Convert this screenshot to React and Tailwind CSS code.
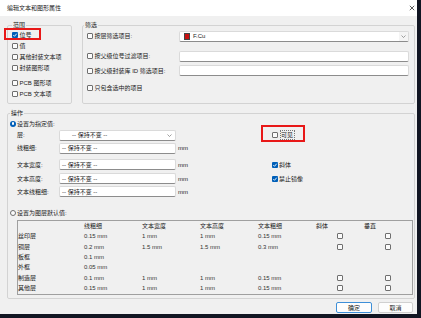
import React from "react";

const FONT = "font-['Liberation_Sans','Noto_Sans_CJK_SC',sans-serif]";

function Box({ checked }) {
  if (checked) {
    return (
      <span className="w-[6px] h-[6px] shrink-0 rounded-[1px] bg-[#005fb8] flex items-center justify-center">
        <svg width="6" height="6" viewBox="0 0 6 6">
          <path d="M1.3 3.1 L2.5 4.3 L4.7 1.7" fill="none" stroke="#fff" strokeWidth="0.9" />
        </svg>
      </span>
    );
  }
  return <span className="w-[6px] h-[6px] shrink-0 rounded-[1px] border border-[#6f6f6f] bg-[#fbfbfb]" />;
}

function Radio({ checked }) {
  if (checked) {
    return (
      <span className="w-[6px] h-[6px] shrink-0 rounded-full bg-[#005fb8] flex items-center justify-center">
        <span className="w-[2.5px] h-[2.5px] rounded-full bg-white" />
      </span>
    );
  }
  return <span className="w-[6px] h-[6px] shrink-0 rounded-full border border-[#6f6f6f] bg-[#fbfbfb]" />;
}

function Chevron() {
  return (
    <svg width="5" height="3" viewBox="0 0 5 3">
      <path d="M0.5 0.5 L2.5 2.5 L4.5 0.5" fill="none" stroke="#777" strokeWidth="0.7" />
    </svg>
  );
}

function Field({ children, className = "" }) {
  return (
    <div className={`h-full bg-white border border-[#dadada] border-b-[#8c8c8c] rounded-[2px] flex items-center ${className}`}>
      {children}
    </div>
  );
}

function Check({ label, checked }) {
  return (
    <div className="h-[11px] flex items-center gap-[1.5px] whitespace-nowrap">
      <Box checked={checked} />
      <span>{label}</span>
    </div>
  );
}

const rows = [
  ["丝印层", "0.15 mm", "1 mm", "1 mm", "0.15 mm", true],
  ["铜层", "0.2 mm", "1.5 mm", "1.5 mm", "0.3 mm", true],
  ["板框", "0.1 mm", "", "", "", false],
  ["外框", "0.05 mm", "", "", "", false],
  ["制造层", "0.1 mm", "1 mm", "1 mm", "0.15 mm", true],
  ["其他层", "0.15 mm", "1 mm", "1 mm", "0.15 mm", true],
];

const KEEP = "-- 保持不变 --";

function ValueRow({ label, dropdown, unit = true, extra, className = "" }) {
  return (
    <div className={`h-[11px] flex items-center pl-[9px] ${className}`}>
      <div className="w-[254px] h-full flex items-center">
        <span className="w-[42px] whitespace-nowrap">{label}</span>
        <div className="w-[117px] h-full">
          {dropdown ? (
            <Field className="pl-[12px] pr-[3px] h-[10px] mt-[0.5px]">
              <span className="whitespace-nowrap">{KEEP}</span>
              <span className="ml-auto"><Chevron /></span>
            </Field>
          ) : (
            <Field className="pl-[2px]">
              <span className="whitespace-nowrap">{KEEP}</span>
            </Field>
          )}
        </div>
        {unit && <span className="ml-[2px]">mm</span>}
      </div>
      {extra}
    </div>
  );
}

export default function App() {
  return (
    <div className={`w-[421px] h-[318px] bg-[#111522] overflow-hidden text-[6px] leading-[8px] text-[#1a1a1a] ${FONT}`}>
      <div className="w-[417px] h-[314px] bg-[#f0f0f0] flex flex-col">
        {/* title bar */}
        <div className="h-[16px] shrink-0 bg-white flex items-center justify-between pl-[7px] pr-[2px]">
          <span>编辑文本和图形属性</span>
          <svg width="6" height="6" viewBox="0 0 6 6">
            <path d="M0.8 0.8 L5.2 5.2 M5.2 0.8 L0.8 5.2" stroke="#333" strokeWidth="0.8" />
          </svg>
        </div>

        <div className="flex flex-col pl-[7px] pr-[2px]">
          <div className="flex mt-[5px] h-[83px]">
            <fieldset className="w-[65px] h-full border border-[#d3d3d3] rounded-[2px] min-w-0">
              <legend className="ml-[4px] px-[1px] leading-[8px]">范围</legend>
              <div className="flex flex-col pl-[4px]">
                <div className="relative">
                  <Check label="位号" checked />
                  <span className="absolute left-[-8px] top-[-1px] w-[37px] h-[11.5px] border-2 border-[#e81818] pointer-events-none" />
                </div>
                <Check label="值" />
                <Check label="其他封装文本项" />
                <Check label="封装图形项" />
                <div className="mt-[4px]">
                  <Check label="PCB 图形项" />
                </div>
                <Check label="PCB 文本项" />
              </div>
            </fieldset>

            <fieldset className="ml-[10px] w-[333px] h-full border border-[#d3d3d3] rounded-[2px] min-w-0">
              <legend className="ml-[1px] px-[1px] leading-[8px]">筛选</legend>
              <div className="flex flex-col pl-[4px]">
                <div className="flex h-[11px] mt-[1.5px]">
                  <div className="w-[92px]"><Check label="按层筛选项目:" /></div>
                  <div className="w-[230px] h-full">
                    <Field className="pl-[4px]">
                      <span className="w-[6px] h-[7px] bg-[#c81010] border-[0.5px] border-[#444]" />
                      <span className="ml-[3px]">F.Cu</span>
                      <span className="ml-auto w-[9px] h-full bg-[#f4f4f4] flex items-center justify-center">
                        <Chevron />
                      </span>
                    </Field>
                  </div>
                </div>
                <div className="flex h-[11px] mt-[9px]">
                  <div className="w-[92px]"><Check label="按父级位号过滤项目:" /></div>
                  <div className="w-[230px] h-full"><Field /></div>
                </div>
                <div className="flex h-[11px] mt-[3.5px]">
                  <div className="w-[92px]"><Check label="按父级封装库 ID 筛选项目:" /></div>
                  <div className="w-[230px] h-full"><Field /></div>
                </div>
                <div className="mt-[6.5px]">
                  <Check label="只包含选中的项目" />
                </div>
              </div>
            </fieldset>
          </div>

          <fieldset className="mt-[5px] w-[408px] h-[190px] border border-[#d3d3d3] rounded-[2px] min-w-0">
            <legend className="ml-[2px] px-[1px] leading-[8px]">操作</legend>
            <div className="flex flex-col">
              <div className="h-[11px] mt-[1px] pl-[2px] flex items-center gap-[1px]">
                <Radio checked />
                <span>设置为指定值:</span>
              </div>
              <ValueRow
                label="层:"
                dropdown
                unit={false}
                extra={
                  <div className="relative pl-[0.5px]">
                    <div className="flex items-center gap-[2px]">
                      <Box />
                      <span className="border-[0.5px] border-dotted border-[#777] px-[0.5px]">可见</span>
                    </div>
                    <span className="absolute left-[-10px] top-[-5px] w-[44px] h-[17px] border-2 border-[#e81818] pointer-events-none" />
                  </div>
                }
              />
              <ValueRow label="线粗细:" className="mt-[2.5px]" />
              <ValueRow
                label="文本宽度:"
                className="mt-[5.5px]"
                extra={<div className="pl-[0.5px]"><Check label="斜体" checked /></div>}
              />
              <ValueRow
                label="文本高度:"
                className="mt-[3px]"
                extra={<div className="pl-[0.5px]"><Check label="禁止镜像" checked /></div>}
              />
              <ValueRow label="文本线粗细:" className="mt-[2px]" />

              <div className="h-[11px] mt-[10px] pl-[2px] flex items-center gap-[1px]">
                <Radio />
                <span>设置为图层默认值:</span>
              </div>

              <div className="ml-[9px] mt-[2px] w-[396px] h-[75px] border border-[#9f9f9f] flex flex-col">
                <div className="h-[10px] grid grid-cols-[66px_58px_58px_58px_58px_48px_1fr] items-center">
                  <span />
                  <span>线粗细</span>
                  <span>文本宽度</span>
                  <span>文本高度</span>
                  <span>文本粗细</span>
                  <span>斜体</span>
                  <span>垂直</span>
                </div>
                {rows.map(([name, a, b, c, d, boxes]) => (
                  <div key={name} className="h-[10.4px] grid grid-cols-[66px_58px_58px_58px_58px_48px_1fr] items-center text-[#333]">
                    <span className="text-[#1a1a1a]">{name}</span>
                    <span>{a}</span>
                    <span>{b}</span>
                    <span>{c}</span>
                    <span>{d}</span>
                    <span className="flex pl-[20.5px]">{boxes && <Box />}</span>
                    <span className="flex pl-[20.5px]">{boxes && <Box />}</span>
                  </div>
                ))}
              </div>
            </div>
          </fieldset>

          <div className="flex justify-end gap-[6px] mt-[3px] pr-[2px]">
            <button className="w-[36px] h-[11px] bg-[#fdfdfd] border border-[#3d8fd8] rounded-[2px] leading-[8px]">确定</button>
            <button className="w-[35px] h-[11px] bg-[#fdfdfd] border border-[#d0d0d0] rounded-[2px] leading-[8px]">取消</button>
          </div>
        </div>
      </div>
    </div>
  );
}
